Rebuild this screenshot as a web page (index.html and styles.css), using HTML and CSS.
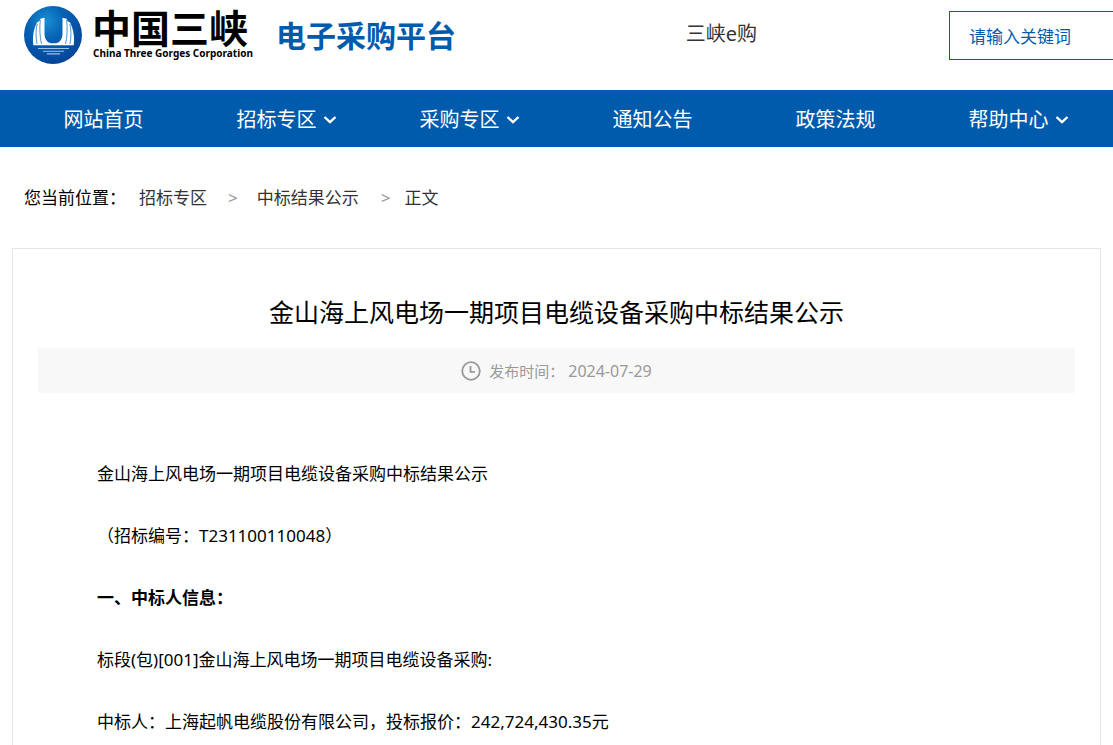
FILE: index.html
```
<!DOCTYPE html>
<html lang="zh-CN">
<head>
<meta charset="utf-8">
<meta name="viewport" content="width=device-width, initial-scale=1">
<title>金山海上风电场一期项目电缆设备采购中标结果公示</title>
<link rel="stylesheet" href="styles.css">
</head>
<body>
<header class="header">
  <a class="brand" href="#">
    <svg class="brand-mark" viewBox="0 0 60 60" aria-hidden="true">
      <defs>
        <radialGradient id="globe" cx="0.38" cy="0.26" r="0.72">
          <stop offset="0" stop-color="#1b8fd0"/>
          <stop offset="0.45" stop-color="#0561b4"/>
          <stop offset="1" stop-color="#03479a"/>
        </radialGradient>
      </defs>
      <circle cx="30" cy="30" r="29" fill="url(#globe)"/>
      <path fill="#fff" d="M21.500 12.800L17.500 13.800L16.500 16L14 17.500L12 22C10 28 9.500 34 10.300 40.300H50.700C51.500 34 51 28 49 22L47 17.500L44.500 16L43.500 13.800L39.500 12.800V28C39.500 34 37 37.500 33 38.300H28C24 37.500 21.500 34 21.500 28Z"/>
      <path fill="none" stroke="#3f87c8" stroke-width="0.9" d="M14.200 19C12.600 25 12.800 32 14 39M17.300 15C16.400 23 16.800 32 18.500 39M46.800 19C48.400 25 48.200 32 47 39M43.700 15C44.600 23 44.200 32 42.500 39"/>
      <path fill="none" stroke="#9fc4e4" stroke-width="1.100" d="M15 43.500H46M20 46.300H41M24 48.900H37"/>
    </svg>
    <span class="brand-text">
      <span class="brand-cn">中国三峡</span>
      <span class="brand-en">China Three Gorges Corporation</span>
    </span>
    <span class="brand-title">电子采购平台</span>
  </a>
  <a class="shop-link" href="#">三峡e购</a>
  <form class="search" role="search">
    <input class="search-input" type="text" placeholder="请输入关键词" aria-label="请输入关键词">
  </form>
</header>

<nav class="nav">
  <a class="nav-item" href="#">网站首页</a>
  <a class="nav-item" href="#">招标专区<svg class="arrow" viewBox="0 0 14 10" aria-hidden="true"><path d="M1.500 2L7 7.200L12.500 2"/></svg></a>
  <a class="nav-item" href="#">采购专区<svg class="arrow" viewBox="0 0 14 10" aria-hidden="true"><path d="M1.500 2L7 7.200L12.500 2"/></svg></a>
  <a class="nav-item" href="#">通知公告</a>
  <a class="nav-item" href="#">政策法规</a>
  <a class="nav-item" href="#">帮助中心<svg class="arrow" viewBox="0 0 14 10" aria-hidden="true"><path d="M1.500 2L7 7.200L12.500 2"/></svg></a>
</nav>

<div class="crumbs">
  <span class="crumbs-label">您当前位置：</span>
  <a href="#">招标专区</a>
  <span class="sep">&gt;</span>
  <a href="#">中标结果公示</a>
  <span class="sep">&gt;</span>
  <span>正文</span>
</div>

<main class="card">
  <h1 class="title">金山海上风电场一期项目电缆设备采购中标结果公示</h1>
  <div class="meta">
    <svg class="clock" viewBox="0 0 20 20" aria-hidden="true"><circle cx="10" cy="10" r="8.800"/><path d="M9.500 5V10.800H14"/></svg>
    <span>发布时间：</span>
    <time class="date" datetime="2024-07-29">2024-07-29</time>
  </div>
  <article class="content">
    <p>金山海上风电场一期项目电缆设备采购中标结果公示</p>
    <p>（招标编号：T231100110048）</p>
    <h2>一、中标人信息：</h2>
    <p>标段(包)[001]金山海上风电场一期项目电缆设备采购:</p>
    <p>中标人：上海起帆电缆股份有限公司，投标报价：242,724,430.35元</p>
  </article>
</main>
</body>
</html>
```
FILE: styles.css
```
* { box-sizing: border-box; }

body {
  margin: 0;
  background: #fff;
  color: #000;
  font-family: "Noto Sans", "Noto Sans CJK SC", sans-serif;
  font-size: 17px;
  line-height: 26px;
}

a { color: inherit; text-decoration: none; }

.header {
  display: flex;
  align-items: flex-start;
  height: 90px;
  padding-left: 23px;
}

.brand {
  display: flex;
  flex: 1;
  align-items: flex-start;
  padding-top: 5px;
  white-space: nowrap;
}

.brand-mark { width: 60px; height: 60px; margin-right: 9px; }

.brand-text { display: flex; flex-direction: column; width: 162px; }

.brand-cn {
  font-family: "Noto Sans CJK SC", sans-serif;
  font-size: 39px;
  font-weight: 700;
  line-height: 42px;
}

.brand-en {
  padding-left: 1px;
  font-size: 10px;
  font-weight: 700;
  line-height: 12px;
}

.brand-title {
  margin-left: 22px;
  color: #005bac;
  font-size: 30px;
  font-weight: 700;
  line-height: 62px;
}

.shop-link {
  margin-right: 192px;
  padding-top: 21px;
  color: #333;
  font-size: 20px;
}

.search { width: 164px; padding-top: 11px; }

.search-input {
  display: block;
  width: 100%;
  height: 49px;
  padding: 2px 0 0 19px;
  border: 1px solid #005bac;
  border-right: 0;
  border-radius: 0;
  background: #fff;
  color: #005bac;
  font: inherit;
}

.search-input::placeholder { color: #005bac; opacity: 1; }

.nav {
  display: grid;
  grid-template-columns: repeat(6, 1fr);
  padding: 0 3px 0 12px;
  background: #005bac;
}

.nav-item {
  display: flex;
  align-items: center;
  justify-content: center;
  gap: 6px;
  height: 57px;
  padding-top: 2px;
  color: #fff;
  font-size: 20px;
}

.arrow { width: 14px; height: 10px; }
.arrow path { fill: none; stroke: #fff; stroke-width: 2.4; }

.crumbs {
  display: flex;
  padding: 38px 24px 37px;
  color: #333;
}

.crumbs-label { margin-right: 13px; color: #000; }

.sep {
  padding: 0 19px 0 21px;
  color: #999;
}

.sep ~ .sep { padding: 0 14px 0 22px; }

.card {
  margin: 0 12px;
  padding: 43px 25px;
  border: 1px solid #e5e5e5;
}

.title {
  margin: 0 0 16px;
  font-size: 25px;
  font-weight: 400;
  line-height: 40px;
  text-align: center;
}

.meta {
  display: flex;
  align-items: center;
  justify-content: center;
  height: 45px;
  background: #f8f8f8;
  color: #999;
  font-size: 15px;
}

.clock { width: 20px; height: 20px; margin-right: 8px; }
.clock circle, .clock path { fill: none; stroke: #999; stroke-width: 1.8; }

.date { margin-left: 4px; font-size: 16px; }

.content { padding: 64px 59px 0; }

.content p, .content h2 {
  margin: 0 0 28px;
  font-size: 17px;
  line-height: 34px;
}
```
